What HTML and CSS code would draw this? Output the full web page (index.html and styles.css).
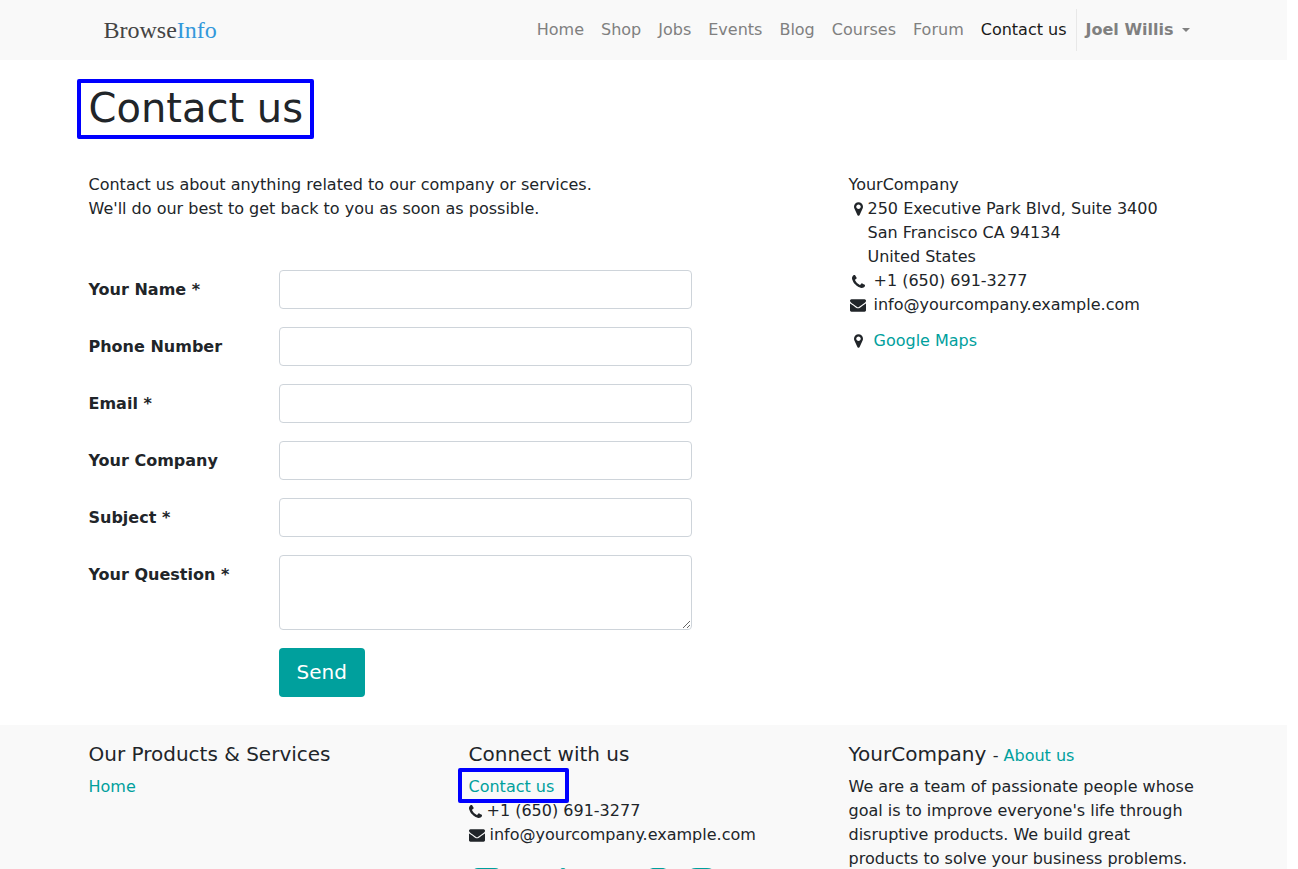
FILE: index.html
```html
<!DOCTYPE html>
<html lang="en">
<head>
<meta charset="utf-8">
<title>Contact us | BrowseInfo</title>
<link rel="stylesheet" href="styles.css">
</head>
<body>
<svg class="sprite" aria-hidden="true">
  <symbol id="marker" viewBox="0 128 1024 1536"><path d="M768 640q0-106-75-181t-181-75-181 75-75 181 75 181 181 75 181-75 75-181zm256 0q0 109-33 179l-364 774q-16 33-47.500 52t-67.500 19-67.500-19-46.500-52l-365-774q-33-70-33-179 0-212 150-362t362-150 362 150 150 362z"/></symbol>
  <symbol id="phone" viewBox="0 128 1408 1408"><path d="M1408 1240q0 27-10 70.500t-21 68.500q-21 50-122 106-94 51-186 51-27 0-53-3.500t-57.500-12.500-47-14.500-55.500-20.500-49-18q-98-35-175-83-127-79-264-216t-216-264q-48-77-83-175-3-9-18-49t-20.500-55.500-14.500-47-12.500-57.500-3.500-53q0-92 51-186 56-101 106-122 25-11 68.500-21t70.500-10q14 0 21 3 18 6 53 76 11 19 30 54t35 63.500 31 53.500q3 4 17.500 25t21.500 35.500 7 28.500q0 20-28.500 50t-62 55-62 53-28.500 46q0 9 5 22.500t8.500 20.500 14 24 11.500 19q76 137 174 235t235 174q2 1 19 11.500t24 14 20.500 8.500 22.500 5q18 0 46-28.500t53-62 55-62 50-28.500q14 0 28.500 7t35.500 21.500 25 17.500q25 15 53.500 31t63.500 35 54 30q70 35 76 53 3 7 3 21z"/></symbol>
  <symbol id="envelope" viewBox="0 256 1792 1408"><path d="M1792 710v794q0 66-47 113t-113 47h-1472q-66 0-113-47t-47-113v-794q44 49 101 87 362 246 497 345 57 42 92.500 65.500t94.500 48 110 24.500h2q51 0 110-24.500t94.500-48 92.500-65.500q170-123 498-345 57-39 100-87zm0-294q0 79-49 151t-122 123q-376 261-468 325-10 7-42.500 31t-54 38.500-52 32.500-57.500 27-50 9h-2q-23 0-50-9t-57.500-27-52-32.500-54-38.500-42.500-31q-91-64-262-182.500t-205-142.500q-62-42-117-115.500t-55-136.500q0-78 41.500-130t118.500-52h1472q65 0 112.500 47t47.500 113z"/></symbol>
</svg>
<div class="page">
  <header class="header">
    <div class="container header-row">
      <a class="logo" href="#">Browse<span class="logo-accent">Info</span></a>
      <nav class="nav">
        <a class="nav-link" href="#">Home</a>
        <a class="nav-link" href="#">Shop</a>
        <a class="nav-link" href="#">Jobs</a>
        <a class="nav-link" href="#">Events</a>
        <a class="nav-link" href="#">Blog</a>
        <a class="nav-link" href="#">Courses</a>
        <a class="nav-link" href="#">Forum</a>
        <a class="nav-link active" href="#" aria-current="page">Contact us</a>
        <button class="nav-link user" type="button">Joel Willis<span class="caret"></span></button>
      </nav>
    </div>
  </header>

  <main class="main container">
    <h1 class="title"><span class="marked marked-title">Contact us</span></h1>
    <div class="columns">
      <section class="contact">
        <p class="intro">Contact us about anything related to our company or services.<br>We'll do our best to get back to you as soon as possible.</p>
        <form class="form">
          <div class="field"><label for="name">Your Name *</label><input id="name" type="text"></div>
          <div class="field"><label for="tel">Phone Number</label><input id="tel" type="tel"></div>
          <div class="field"><label for="email">Email *</label><input id="email" type="email"></div>
          <div class="field"><label for="company">Your Company</label><input id="company" type="text"></div>
          <div class="field"><label for="subject">Subject *</label><input id="subject" type="text"></div>
          <div class="field"><label for="question">Your Question *</label><textarea id="question"></textarea></div>
          <div class="field"><button class="send" type="button">Send</button></div>
        </form>
      </section>
      <address class="company">
        <div>YourCompany</div>
        <div class="place"><span class="slot"><svg class="icon marker"><use href="#marker"/></svg></span><span>250 Executive Park Blvd, Suite 3400<br>San Francisco CA 94134<br>United States</span></div>
        <div class="line"><span class="slot"><svg class="icon phone"><use href="#phone"/></svg></span>+1 (650) 691-3277</div>
        <div class="line"><span class="slot"><svg class="icon envelope"><use href="#envelope"/></svg></span>info@yourcompany.example.com</div>
        <div class="line map"><span class="slot"><svg class="icon marker"><use href="#marker"/></svg></span><a href="#">Google Maps</a></div>
      </address>
    </div>
  </main>

  <footer class="footer">
    <div class="container columns">
      <section>
        <h2 class="footer-title">Our Products &amp; Services</h2>
        <a href="#">Home</a>
      </section>
      <section>
        <h2 class="footer-title">Connect with us</h2>
        <div><a class="marked marked-link" href="#">Contact us</a></div>
        <div class="compact"><svg class="icon phone"><use href="#phone"/></svg>+1 (650) 691-3277</div>
        <div class="compact"><svg class="icon envelope"><use href="#envelope"/></svg>info@yourcompany.example.com</div>
        <div class="social">
          <a href="#" aria-label="Facebook"><svg viewBox="0 0 27 27"><path d="M5 0h17q5 0 5 5v17q0 5-5 5h-4V17h4v-4h-4v-3q0-2 2-2h2V4h-3q-5 0-5 5v4h-4v4h4v10H5q-5 0-5-5V5q0-5 5-5z"/></svg></a>
          <a href="#" aria-label="Twitter"><svg viewBox="0 0 27 27"><path d="M27 6q-1 2-3 3 0 9-6 13T2 23q5 0 8-2-4-1-5-4h2q-4-2-4-6l2 1Q2 9 4 5q4 5 11 6 0-5 4-6 3 0 5 2l3-1-2 3z"/></svg></a>
          <a href="#" aria-label="LinkedIn"><svg viewBox="0 0 27 27"><path d="M1 9h5v17H1zM4 0a3 3 0 1 1 0 6 3 3 0 0 1 0-6zM10 9h5v2q6-5 11 2v13h-5V16q-3-5-6 0v10h-5z"/></svg></a>
          <a href="#" aria-label="YouTube"><svg viewBox="0 0 27 27"><path d="M4 4q10-1 19 0 4 1 4 10t-4 9q-10 1-19 0-4-1-4-9T4 4zm7 5v9l8-4z"/></svg></a>
          <a href="#" aria-label="GitHub"><svg viewBox="0 0 27 27"><path d="M13 0a13 13 0 0 1 5 26v-5q0-2-1-2 8-2 4-10l-1-4-4 2h-6L6 5 5 9q-4 8 4 10l-1 3v4A13 13 0 0 1 13 0z"/></svg></a>
          <a href="#" aria-label="Instagram"><svg viewBox="0 0 27 27"><path fill-rule="evenodd" d="M8 0h11q8 0 8 8v11q0 8-8 8H8q-8 0-8-8V8q0-8 8-8zm0 3Q3 3 3 8v11q0 5 5 5h11q5 0 5-5V8q0-5-5-5zm5 4a7 7 0 1 1 0 14 7 7 0 0 1 0-14zm0 3a4 4 0 1 0 0 8 4 4 0 0 0 0-8z"/></svg></a>
        </div>
      </section>
      <section>
        <h2 class="footer-title">YourCompany <small>- <a href="#">About us</a></small></h2>
        <p class="about">We are a team of passionate people whose goal is to improve everyone's life through disruptive products. We build great products to solve your business problems.</p>
      </section>
    </div>
  </footer>
</div>
</body>
</html>
```
FILE: styles.css
```css
* { box-sizing: border-box; }
body {
  margin: 0;
  background: #fff;
  color: #212529;
  font: 16px/24px "DejaVu Sans", sans-serif;
}
a { color: #00a09d; text-decoration: none; }
.sprite { display: none; }
.page {
  display: flex;
  flex-direction: column;
  height: 100vh;
  margin-right: 11px;
  overflow-y: auto;
  scrollbar-width: none;
}
.container {
  width: 100%;
  max-width: 1140px;
  margin: 0 auto;
  padding: 0 15px;
}
.header { flex: none; background: #f9f9f9; }
.header-row {
  display: flex;
  align-items: center;
  justify-content: space-between;
  height: 60px;
}
.logo {
  padding-left: 15px;
  color: #444;
  font: 24px/40px "Liberation Serif", serif;
}
.logo-accent { color: #3498db; }
.nav { display: flex; gap: 1px; }
.nav-link {
  padding: 9px 8px;
  color: #808080;
}
.active { color: #1a1a1a; }
.user {
  display: flex;
  align-items: center;
  padding: 9px;
  border: 0;
  border-left: 1px solid #e8e8e8;
  background: none;
  font: inherit;
  font-weight: bold;
}
.caret {
  margin-left: 8px;
  border: 4px solid transparent;
  border-top-color: currentColor;
  border-bottom: 0;
}

.main { flex: none; }
.title {
  margin: 24px 0 41px;
  font-size: 40px;
  font-weight: 400;
  line-height: 48px;
}
.marked { position: relative; display: inline-block; }
.marked::after {
  content: "";
  position: absolute;
  border: 4px solid #00f;
  border-radius: 2px;
  pointer-events: none;
}
.marked-title::after { inset: -5px -11px -7px -12px; }
.marked-link::after { inset: -7px -15px -4px -11px; }
.columns {
  display: grid;
  grid-template-columns: repeat(3, 1fr);
  column-gap: 30px;
}
.contact { grid-column: span 2; padding-right: 127px; }
.intro { margin: 0 0 49px; }
.form { display: grid; gap: 18px; }
.field {
  display: grid;
  grid-template-columns: 190px 1fr;
  align-items: start;
}
label { padding-top: 8px; font-weight: bold; }
input, textarea {
  display: block;
  width: 100%;
  height: 39px;
  padding: 6px 12px;
  border: 1px solid #ced4da;
  border-radius: 4px;
  background: #fff;
  font: inherit;
}
textarea { height: 75px; resize: vertical; }
.send {
  grid-column: 2;
  justify-self: start;
  padding: 9px 18px;
  border: 0;
  border-radius: 4px;
  background: #00a09d;
  color: #fff;
  font: 20px/31px "DejaVu Sans", sans-serif;
}
.company { font-style: normal; }
.place, .line { display: flex; }
.line { gap: 6px; }
.slot {
  display: flex;
  flex: none;
  align-items: center;
  justify-content: center;
  width: 19px;
  height: 24px;
}
.map { margin-top: 12px; }
.icon { flex: none; fill: #212529; }
.marker { width: 9px; height: 14px; }
.phone { width: 13px; height: 13px; }
.envelope { width: 16px; height: 13px; }

.footer {
  flex: none;
  margin-top: 28px;
  padding: 17px 0 24px;
  background: #f9f9f9;
}
.footer-title {
  margin: 0 0 9px;
  font-size: 20px;
  font-weight: 400;
  line-height: 24px;
}
.footer-title small { font-size: 16px; line-height: 16px; }
.compact { display: flex; align-items: center; gap: 5px; }
.social { display: flex; gap: 16px; padding: 21px 4px; }
.social svg { display: block; width: 27px; height: 27px; fill: #00a09d; }
.about { margin: 0; }
```
